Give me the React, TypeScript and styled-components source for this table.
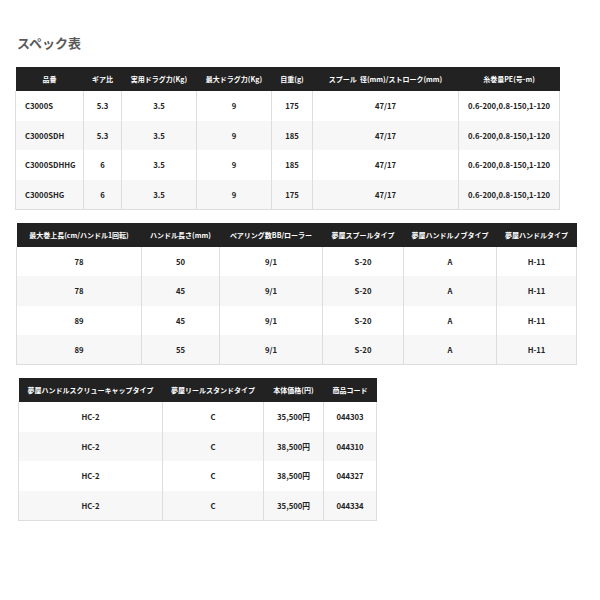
import React from "react";
import styled, { createGlobalStyle } from "styled-components";

const Global = createGlobalStyle`
  html, body { margin: 0; padding: 0; background: #fff; }
  body { font-family: "Noto Sans CJK JP", "Noto Sans", sans-serif; }
`;

const Page = styled.div`
  width: 600px;
  height: 600px;
  padding: 35px 0 0 0;
  box-sizing: border-box;
  display: flex;
  flex-direction: column;
`;

const Title = styled.h2`
  margin: 0 0 17px 17px;
  font-size: 13px;
  line-height: 15px;
  font-weight: 700;
  color: #5a5a5a;
`;

const Table = styled.table<{ $left: number; $mb: number }>`
  border-collapse: collapse;
  table-layout: fixed;
  margin: 0 0 ${(p) => p.$mb}px ${(p) => p.$left}px;
  font-size: 7.7px;
  font-weight: 700;
  color: #222;
`;

const Th = styled.th`
  background: #222;
  color: #fff;
  height: 24px;
  padding: 0;
  font-size: 7px;
  font-weight: 700;
  text-align: center;
  white-space: nowrap;
  overflow: hidden;
`;

const Row = styled.tr<{ $alt: boolean }>`
  background: ${(p) => (p.$alt ? "#f7f7f7" : "#fff")};
  height: 29.5px;
  &:last-child td { border-bottom: 1px solid #ddd; }
`;

const Td = styled.td<{ $align?: string }>`
  padding: 0;
  padding-left: ${(p) => (p.$align === "left" ? "9px" : "0")};
  text-align: ${(p) => p.$align || "center"};
  border-left: 1px solid #ddd;
  border-right: 1px solid #ddd;
  white-space: nowrap;
`;

type Spec = {
  left: number;
  mb: number;
  widths: number[];
  heads: string[];
  rows: string[][];
  firstLeft?: boolean;
};

const specs: Spec[] = [
  {
    left: 15,
    mb: 13,
    widths: [68, 38, 75, 75, 41, 146, 101],
    heads: [
      "品番",
      "ギア比",
      "実用ドラグ力(Kg)",
      "最大ドラグ力(Kg)",
      "自重(g)",
      "スプール\u00a0\u00a0径(mm)/ストローク(mm)",
      "糸巻量PE(号-m)",
    ],
    rows: [
      ["C3000S", "5.3", "3.5", "9", "175", "47/17", "0.6-200,0.8-150,1-120"],
      ["C3000SDH", "5.3", "3.5", "9", "185", "47/17", "0.6-200,0.8-150,1-120"],
      ["C3000SDHHG", "6", "3.5", "9", "185", "47/17", "0.6-200,0.8-150,1-120"],
      ["C3000SHG", "6", "3.5", "9", "175", "47/17", "0.6-200,0.8-150,1-120"],
    ],
    firstLeft: true,
  },
  {
    left: 16,
    mb: 13,
    widths: [125, 78, 103, 81, 93, 80],
    heads: [
      "最大巻上長(cm/ハンドル1回転)",
      "ハンドル長さ(mm)",
      "ベアリング数BB/ローラー",
      "夢屋スプールタイプ",
      "夢屋ハンドルノブタイプ",
      "夢屋ハンドルタイプ",
    ],
    rows: [
      ["78", "50", "9/1", "S-20", "A", "H-11"],
      ["78", "45", "9/1", "S-20", "A", "H-11"],
      ["89", "45", "9/1", "S-20", "A", "H-11"],
      ["89", "55", "9/1", "S-20", "A", "H-11"],
    ],
  },
  {
    left: 18,
    mb: 0,
    widths: [144, 101, 60, 53],
    heads: [
      "夢屋ハンドルスクリューキャップタイプ",
      "夢屋リールスタンドタイプ",
      "本体価格(円)",
      "商品コード",
    ],
    rows: [
      ["HC-2", "C", "35,500円", "044303"],
      ["HC-2", "C", "38,500円", "044310"],
      ["HC-2", "C", "38,500円", "044327"],
      ["HC-2", "C", "35,500円", "044334"],
    ],
  },
];

const SpecTable = ({ spec }: { spec: Spec }) => (
  <Table
    $left={spec.left}
    $mb={spec.mb}
    style={{ width: spec.widths.reduce((a, b) => a + b, 0) }}
  >
    <colgroup>
      {spec.widths.map((w, i) => (
        <col key={i} style={{ width: w }} />
      ))}
    </colgroup>
    <thead>
      <tr>
        {spec.heads.map((h, i) => (
          <Th key={i}>{h}</Th>
        ))}
      </tr>
    </thead>
    <tbody>
      {spec.rows.map((r, ri) => (
        <Row key={ri} $alt={ri % 2 === 1}>
          {r.map((c, ci) => (
            <Td key={ci} $align={spec.firstLeft && ci === 0 ? "left" : "center"}>
              {c}
            </Td>
          ))}
        </Row>
      ))}
    </tbody>
  </Table>
);

export default function App() {
  return (
    <>
      <Global />
      <Page>
        <Title>スペック表</Title>
        {specs.map((s, i) => (
          <SpecTable key={i} spec={s} />
        ))}
      </Page>
    </>
  );
}
